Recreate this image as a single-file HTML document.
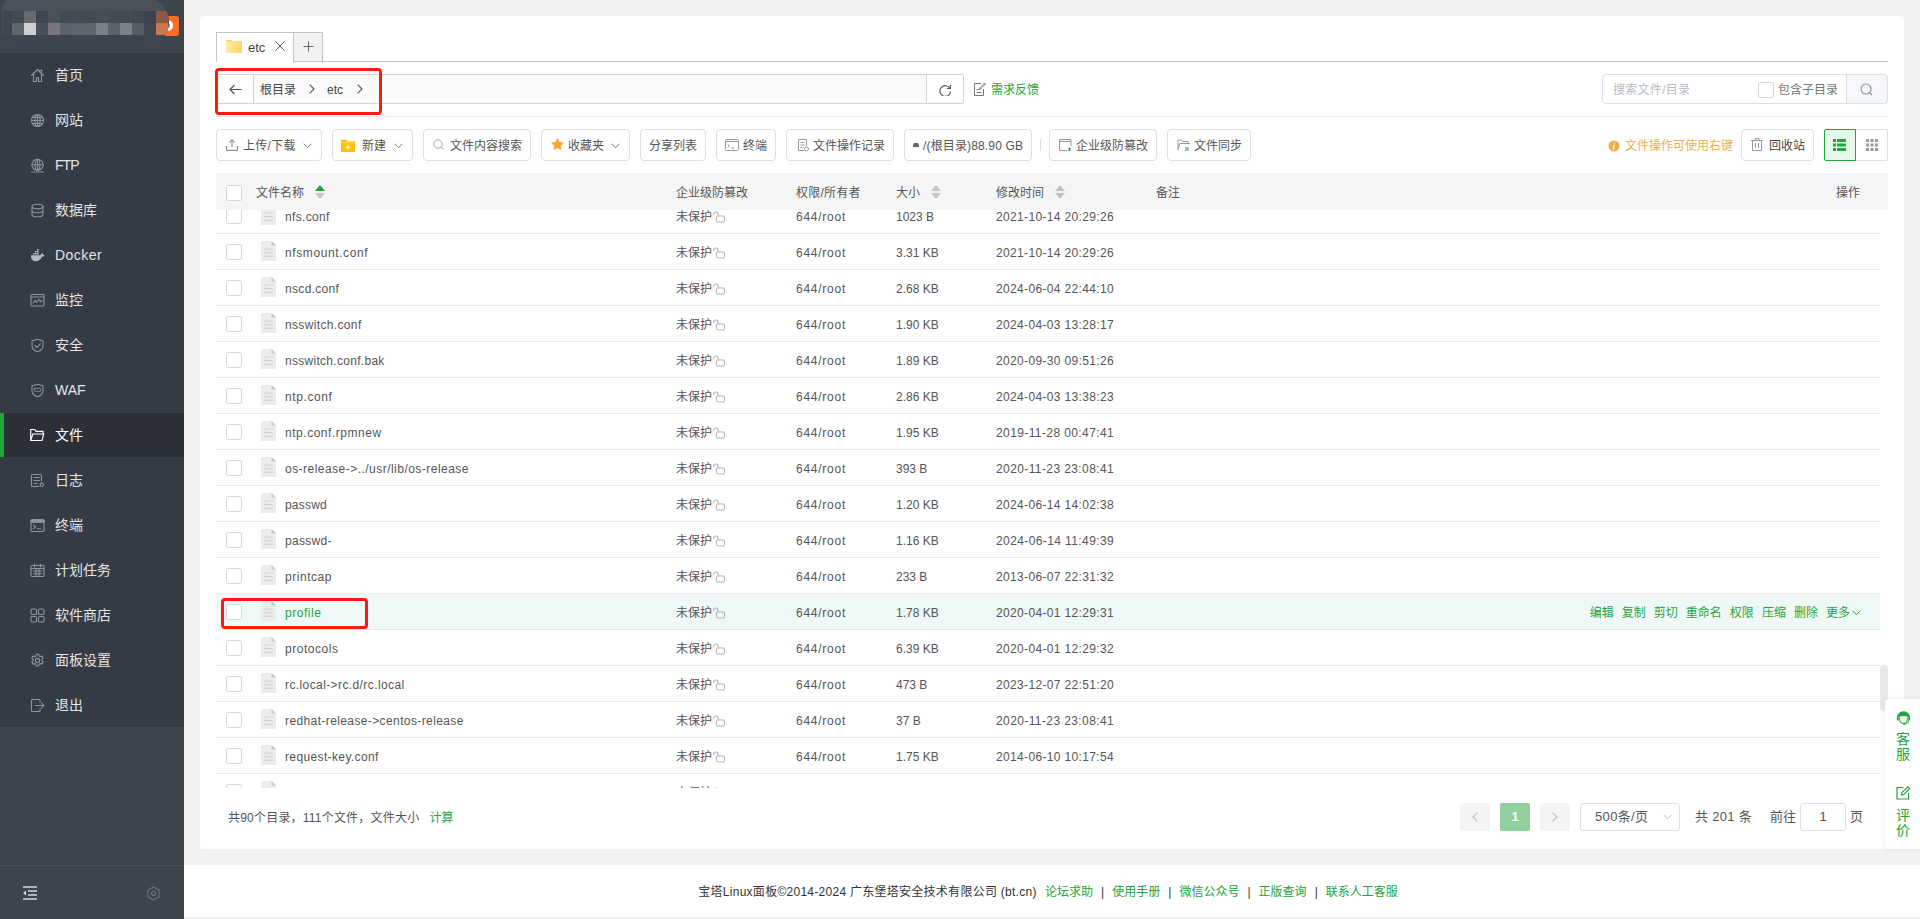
<!DOCTYPE html>
<html lang="zh-CN">
<head>
<meta charset="utf-8">
<title>宝塔Linux面板</title>
<style>
*{box-sizing:border-box;margin:0;padding:0}
html,body{width:1920px;height:919px;overflow:hidden}
body{position:relative;background:#f2f2f2;font-family:"Liberation Sans","Noto Sans CJK SC",sans-serif;font-size:12px;color:#666;line-height:1}
.a{position:absolute}
svg{display:block;position:absolute}
#side{position:absolute;left:0;top:0;width:184px;height:919px;background:#3d444d}
#side .menu{position:absolute;left:0;top:53px;width:184px;height:674px;background:#353b44}
.mi{position:relative;height:44px;width:184px;margin-bottom:1px}
.mi svg{left:30px;top:15px}
.mi .tx{position:absolute;left:55px;top:0;height:44px;line-height:44px;font-size:14px;color:#e4e4e4;white-space:nowrap}
.mi.on{background:#2b3038}
.mi.on:before{content:"";position:absolute;left:0;top:0;width:4px;height:44px;background:#20a53a}
.mi.on .tx{color:#fff}
#side .bt{position:absolute;left:0;top:865px;width:184px;height:54px;border-top:1px solid #48505a}
#card{position:absolute;left:200px;top:16px;width:1704px;height:833px;background:#fff;border-radius:4px}
#foot{position:absolute;left:184px;top:865px;width:1736px;height:52px;background:#fff}
#foot .t{position:absolute;left:0;top:0;width:1736px;height:52px;line-height:54px;text-align:center;color:#333;white-space:nowrap}
#foot .t a{color:#20a53a}
#foot .t i{font-style:normal;color:#333;display:inline-block;width:19.200px;text-align:center}
.btn{position:absolute;top:129px;height:32px;border:1px solid #dcdfe6;border-radius:4px;background:#fff;color:#555;white-space:nowrap}
.btn span{position:absolute;top:1px;line-height:30px}
.g{color:#20a53a}
.cb{position:absolute;width:16px;height:16px;border:1px solid #d4d7e0;border-radius:2px;background:#fff}
.row{position:absolute;left:216px;width:1664px;height:36px;border-bottom:1px solid #ececec}
.row span{position:absolute;top:2px;line-height:35px;white-space:nowrap;color:#555}
.row .cb{left:10px;top:10px}
.row .fi{left:45px;top:7px}
.row .n{left:69px}
.row .p{left:460px}
.row .lk{left:497px;top:13px}
.row .o{left:580px}
.row .s{left:680px}
.row .d{left:780px}
.row.hv{background:#f0f8f7;border-bottom-color:#daeee8}
.row.hv .n{color:#20a53a}
.row .act{left:1365.800px;color:#20a53a}
.row .act b{font-weight:normal;margin-left:8px}
.th{position:absolute;top:175px;height:36px;line-height:37px;color:#555;white-space:nowrap}
.sa{position:absolute;width:0;height:0;border-left:5px solid transparent;border-right:5px solid transparent}
.sa.u{border-bottom:6px solid #c0c4cc}
.sa.d{border-top:6px solid #c0c4cc}
.pg{position:absolute;top:803px;height:28px;border-radius:2px;line-height:28px;text-align:center;color:#555;font-size:13px;white-space:nowrap}
</style>
</head>
<body>
<div id="side">
<div class="a" style="left:160px;top:16px;width:19px;height:20px;border-radius:3px;background:#fc6d26"></div>
<div class="a" style="left:161px;top:20px;width:12px;height:11px;border:3.500px solid #fff;border-radius:6px"></div>
<div class="a" style="left:2px;top:-3px;width:167px;height:50px;border-radius:14px 25px 25px 14px;background:#4a5159;overflow:hidden"><div class="a" style="left:1px;top:14px;width:9px;height:24px;background:#3f464f"></div><div class="a" style="left:10px;top:14px;width:12px;height:12px;background:#434a53"></div><div class="a" style="left:22px;top:14px;width:12px;height:12px;background:#656b73"></div><div class="a" style="left:34px;top:14px;width:12px;height:12px;background:#3e454e"></div><div class="a" style="left:46px;top:14px;width:12px;height:12px;background:#4a5159"></div><div class="a" style="left:58px;top:14px;width:12px;height:12px;background:#434a52"></div><div class="a" style="left:70px;top:14px;width:12px;height:12px;background:#444b53"></div><div class="a" style="left:82px;top:14px;width:12px;height:12px;background:#434a52"></div><div class="a" style="left:94px;top:14px;width:12px;height:12px;background:#464d55"></div><div class="a" style="left:106px;top:14px;width:12px;height:12px;background:#444b53"></div><div class="a" style="left:118px;top:14px;width:12px;height:12px;background:#444b53"></div><div class="a" style="left:130px;top:14px;width:12px;height:12px;background:#414850"></div><div class="a" style="left:142px;top:14px;width:12px;height:12px;background:#3b424b"></div><div class="a" style="left:154px;top:14px;width:12px;height:12px;background:#8a5a45"></div><div class="a" style="left:10px;top:26px;width:12px;height:12px;background:#60666e"></div><div class="a" style="left:22px;top:26px;width:12px;height:12px;background:#cfd0d2"></div><div class="a" style="left:34px;top:26px;width:12px;height:12px;background:#48505a"></div><div class="a" style="left:46px;top:26px;width:12px;height:12px;background:#76767c"></div><div class="a" style="left:58px;top:26px;width:12px;height:12px;background:#5b616a"></div><div class="a" style="left:70px;top:26px;width:12px;height:12px;background:#5e656d"></div><div class="a" style="left:82px;top:26px;width:12px;height:12px;background:#5f646d"></div><div class="a" style="left:94px;top:26px;width:12px;height:12px;background:#7a8086"></div><div class="a" style="left:106px;top:26px;width:12px;height:12px;background:#5c626a"></div><div class="a" style="left:118px;top:26px;width:12px;height:12px;background:#7b8187"></div><div class="a" style="left:130px;top:26px;width:12px;height:12px;background:#565c64"></div><div class="a" style="left:142px;top:26px;width:12px;height:12px;background:#3e454e"></div><div class="a" style="left:154px;top:26px;width:12px;height:12px;background:#c87850"></div><div class="a" style="left:0;top:38px;width:167px;height:20px;background:#3d444d"></div><div class="a" style="left:154px;top:38px;width:12px;height:12px;background:#44454b"></div></div>

<div class="menu">
<div class="mi"><svg width="15" height="15" viewBox="0 0 15 15" ><path fill="none" stroke="#8f959c" stroke-width="1.1" stroke-linecap="round" stroke-linejoin="round" d="M1.5 7.5L7.5 1.5L13.5 7.5M3.5 6v7.5h3v-4h2v4h3V6M10 2.2h1.6v1.6"/></svg><div class="tx" style="">首页</div></div>
<div class="mi"><svg width="15" height="15" viewBox="0 0 15 15" ><g fill="none" stroke="#8f959c" stroke-width="1.1" stroke-linecap="round" stroke-linejoin="round"><circle cx="7.5" cy="7.5" r="6"/><ellipse cx="7.5" cy="7.5" rx="2.6" ry="6"/><path d="M1.5 7.5h12M2.4 4.5h10.2M2.4 10.5h10.2M7.5 1.5v12"/></g></svg><div class="tx" style="">网站</div></div>
<div class="mi"><svg width="15" height="15" viewBox="0 0 15 15" ><g fill="none" stroke="#8f959c" stroke-width="1.1" stroke-linecap="round" stroke-linejoin="round"><circle cx="7.5" cy="6.8" r="5.6"/><ellipse cx="7.5" cy="6.8" rx="2.4" ry="5.6"/><path d="M1.9 6.8h11.2M7.5 1.2v11.2M1.5 14h12"/></g></svg><div class="tx" style="letter-spacing:-0.98px">FTP</div></div>
<div class="mi"><svg width="15" height="15" viewBox="0 0 15 15" ><g fill="none" stroke="#8f959c" stroke-width="1.1" stroke-linecap="round" stroke-linejoin="round"><ellipse cx="7.5" cy="3.6" rx="5.5" ry="2.3"/><path d="M2 3.6v7.8c0 1.3 2.5 2.3 5.5 2.3s5.5-1 5.5-2.3V3.6M2 7.5c0 1.3 2.5 2.3 5.5 2.3s5.5-1 5.5-2.3"/></g></svg><div class="tx" style="">数据库</div></div>
<div class="mi"><svg width="15" height="15" viewBox="0 0 15 15" ><path fill="#b9bdc2" d="M1 7.2h9.6c.3-1.2 1-1.9 1.9-2.2.3.6.3 1.2.1 1.8.7-.1 1.4 0 1.9.4-.5 1-1.500 1.500-2.800 1.500C10.700 11.600 8.600 13.200 5.600 13.200 2.800 13.200 1 11.500 1 7.200zM3 5h1.600v1.600H3zM5 5h1.600v1.600H5zM7 5h1.600v1.600H7zM5 3h1.600v1.600H5zM7 3h1.600v1.600H7zM7 1h1.600v1.600H7z"/></svg><div class="tx" style="letter-spacing:0.44px">Docker</div></div>
<div class="mi"><svg width="15" height="15" viewBox="0 0 15 15" ><g fill="none" stroke="#8f959c" stroke-width="1.1" stroke-linecap="round" stroke-linejoin="round"><rect x="1" y="1.5" width="13" height="11.5" rx="1"/><path d="M1 4h13M3 10l2-2.5 1.800 1.800 2-3 1.700 2.500 1.500-1.300"/></g></svg><div class="tx" style="">监控</div></div>
<div class="mi"><svg width="15" height="15" viewBox="0 0 15 15" ><g fill="none" stroke="#8f959c" stroke-width="1.1" stroke-linecap="round" stroke-linejoin="round"><path d="M7.500 1.200L13 3v4.500c0 3-2.300 5.300-5.500 6.300C4.300 12.800 2 10.500 2 7.500V3z"/><path d="M5 7.500l2 2 3.200-3.500"/></g></svg><div class="tx" style="">安全</div></div>
<div class="mi"><svg width="15" height="15" viewBox="0 0 15 15" ><g fill="none" stroke="#8f959c" stroke-width="1.1" stroke-linecap="round" stroke-linejoin="round"><path d="M7.500 1.200L13 3v4.500c0 3-2.300 5.300-5.500 6.300C4.300 12.800 2 10.500 2 7.500V3z"/><rect x="4.300" y="5.300" width="6.400" height="3" rx=".5" stroke-width=".8"/></g></svg><div class="tx" style="letter-spacing:-0.03px">WAF</div></div>
<div class="mi on"><svg width="15" height="15" viewBox="0 0 15 15" ><path fill="none" stroke="#fff" stroke-width="1.150" stroke-linejoin="miter" d="M.700 12.500V1.500h4.200l1.100 1.900h7v2.600M.700 12.500L2.800 6h10.900l-1.700 6.500z"/></svg><div class="tx" style="">文件</div></div>
<div class="mi"><svg width="15" height="15" viewBox="0 0 15 15" ><g fill="none" stroke="#8f959c" stroke-width="1.1" stroke-linecap="round" stroke-linejoin="round"><path d="M9 13.500H2.500a1 1 0 0 1-1-1v-10a1 1 0 0 1 1-1h8a1 1 0 0 1 1 1V8M4 4.500h5.500M4 7.500h5.500M4 10.500h3"/><circle cx="11.800" cy="11.800" r="1.700"/></g></svg><div class="tx" style="">日志</div></div>
<div class="mi"><svg width="15" height="15" viewBox="0 0 15 15" ><g fill="none" stroke="#8f959c" stroke-width="1.1" stroke-linecap="round" stroke-linejoin="round"><rect x="1" y="1.500" width="13" height="12" rx="1"/><path d="M1 4.300h13M3.500 7l2 1.800-2 1.800M7.500 10.800h3" /><path d="M1 2.500h13v1.500H1z" fill="#8f959c"/></g></svg><div class="tx" style="">终端</div></div>
<div class="mi"><svg width="15" height="15" viewBox="0 0 15 15" ><g fill="none" stroke="#8f959c" stroke-width="1.1" stroke-linecap="round" stroke-linejoin="round"><rect x="1" y="2.500" width="13" height="11" rx="1"/><path d="M1 5.500h13M4.500 1v3M10.500 1v3M3.500 8h8M3.500 10.800h8M6 5.500v8M9 5.500v8"/></g></svg><div class="tx" style="">计划任务</div></div>
<div class="mi"><svg width="15" height="15" viewBox="0 0 15 15" ><g fill="none" stroke="#8f959c" stroke-width="1.1" stroke-linecap="round" stroke-linejoin="round"><rect x="1" y="1" width="5.500" height="5.500" rx="1"/><rect x="8.500" y="1" width="5.500" height="5.500" rx="1"/><rect x="1" y="8.500" width="5.500" height="5.500" rx="1"/><rect x="8.500" y="8.500" width="5.500" height="5.500" rx="1"/></g></svg><div class="tx" style="">软件商店</div></div>
<div class="mi"><svg width="15" height="15" viewBox="0 0 15 15" ><g fill="none" stroke="#8f959c" stroke-width="1.1" stroke-linecap="round" stroke-linejoin="round"><path d="M6.300 1.200h2.400l.4 1.700 1.200.7 1.700-.5 1.200 2.100-1.300 1.200v1.400l1.300 1.200-1.200 2.100-1.700-.5-1.200.7-.4 1.700H6.300l-.4-1.700-1.200-.7-1.700.5-1.200-2.100 1.300-1.200V6.400L1.800 5.200 3 3.100l1.700.5 1.200-.7z"/><circle cx="7.500" cy="7.500" r="2.100"/></g></svg><div class="tx" style="">面板设置</div></div>
<div class="mi"><svg width="15" height="15" viewBox="0 0 15 15" ><g fill="none" stroke="#8f959c" stroke-width="1.1" stroke-linecap="round" stroke-linejoin="round"><path d="M10 4V2.500a1 1 0 0 0-1-1H2.500a1 1 0 0 0-1 1v10a1 1 0 0 0 1 1H9a1 1 0 0 0 1-1V11M5.500 7.500h8M11.500 5l2.300 2.500-2.300 2.500"/></g></svg><div class="tx" style="">退出</div></div>
</div>
<div class="bt"><svg width="15" height="14" viewBox="0 0 15 14" style="left:23px;top:20px"><path fill="none" stroke="#d5d7d9" stroke-width="1.400" d="M0 1h14M5 5h9M5 9h9M0 13h14"/><path fill="#d5d7d9" d="M3 4.500v5L0 7z"/></svg><svg width="15" height="15" viewBox="0 0 15 15" style="left:146px;top:20px"><g fill="none" stroke="#6f7680" stroke-width="1.100" stroke-linejoin="round"><path d="M7.500 1l5.600 3.200v6.600L7.500 14 1.900 10.800V4.200z"/><circle cx="7.500" cy="7.500" r="2"/></g></svg></div>
</div>
<div id="card"></div>
<div class="a" style="left:216px;top:61px;width:1672px;height:1px;background:#c4c4c4"></div>
<div class="a" style="left:216px;top:32px;width:78px;height:30px;border:1px solid #c4c4c4;border-bottom:none;background:#fff"></div>
<div class="a" style="left:293px;top:32px;width:30px;height:30px;border:1px solid #c4c4c4;background:#f2f2f2"></div>
<div class="a" style="left:226px;top:40px;width:6px;height:2px;border-radius:1px 1px 0 0;background:#ffca4a"></div><div class="a" style="left:226px;top:41px;width:16px;height:12px;border-radius:1px;background:linear-gradient(90deg,#ffe9a6,#ffd766)"></div>
<div class="a" style="left:248px;top:33px;line-height:30px;font-size:13px;color:#444">etc</div>
<svg width="10" height="10" viewBox="0 0 10 10" style="left:275px;top:41px"><path d="M.5.500l9 9M9.500.500l-9 9" stroke="#555" stroke-width="1" fill="none"/></svg>
<svg width="11" height="11" viewBox="0 0 11 11" style="left:303px;top:41px"><path d="M5.500.500v10M.500 5.500h10" stroke="#666" stroke-width="1" fill="none"/></svg>
<div class="a" style="left:216px;top:74px;width:711px;height:30px;border:1px solid #d3d3d3;background:#fafafa;border-radius:2px 0 0 2px"></div>
<div class="a" style="left:216px;top:74px;width:38px;height:30px;border:1px solid #d3d3d3;background:#fff;border-radius:2px 0 0 2px"></div>
<svg width="13" height="11" viewBox="0 0 13 11" style="left:229px;top:84px"><path d="M12.500 5.500H1M5.500 1L1 5.500 5.500 10" stroke="#555" stroke-width="1.200" fill="none"/></svg>
<div class="a" style="left:260px;top:76px;line-height:28px;color:#444;white-space:nowrap">根目录</div>
<svg width="6" height="10" viewBox="0 0 6 10" style="left:309px;top:84px"><path d="M.700.700L5 5 .700 9.300" stroke="#555" stroke-width="1.100" fill="none"/></svg>
<div class="a" style="left:327px;top:76px;line-height:28px;color:#444;white-space:nowrap">etc</div>
<svg width="6" height="10" viewBox="0 0 6 10" style="left:357px;top:84px"><path d="M.700.700L5 5 .700 9.300" stroke="#555" stroke-width="1.100" fill="none"/></svg>
<div class="a" style="left:926px;top:74px;width:38px;height:30px;border:1px solid #d3d3d3;background:#fff;border-radius:0 2px 2px 0"></div>
<svg width="12.500" height="12.500" viewBox="0 0 14 14" style="left:939px;top:83.500px"><path d="M12.300 5A6 6 0 1 0 13 8.500M12.800 1.200V5H9" stroke="#555" stroke-width="1.300" fill="none"/></svg>
<svg width="13" height="14" viewBox="0 0 13 14" style="left:973px;top:82px"><g fill="none" stroke="#777" stroke-width="1"><path d="M8 1.500H1.500v12h9V7"/><path d="M3.500 7.500h4M3.500 10.500h5M6.500 6l5-5 1 1-5 5z"/></g></svg>
<div class="a g" style="left:991px;top:76px;line-height:28px;white-space:nowrap">需求反馈</div>
<div class="a" style="left:1602px;top:74px;width:286px;height:30px;border:1px solid #dcdfe6;border-radius:4px;background:#fff"></div>
<div class="a" style="left:1846px;top:74px;width:42px;height:30px;border:1px solid #dcdfe6;border-radius:0 4px 4px 0;background:#f5f7fa"></div>
<div class="a" style="left:1613px;top:76px;line-height:28px;color:#b8bcc4;white-space:nowrap;letter-spacing:0.29px">搜索文件/目录</div>
<div class="cb" style="left:1758px;top:82px"></div>
<div class="a" style="left:1778px;top:76px;line-height:28px;color:#777;white-space:nowrap">包含子目录</div>
<svg width="13" height="13" viewBox="0 0 13 13" style="left:1860px;top:83px"><g fill="none" stroke="#8a8f99" stroke-width="1.100"><circle cx="6" cy="6" r="5"/><path d="M9.700 9.700l2.300 2.300"/></g></svg>
<div class="a" style="left:216px;top:116px;width:1672px;height:1px;background:#ececec"></div>
<div class="btn" style="left:216px;width:106px"><svg width="12" height="12" viewBox="0 0 12 12" style="left:9px;top:9px"><path d="M6 8V1M3 3.500L6 .800 9 3.500M.600 7v4.400h10.800V7" stroke="#777" stroke-width="1" fill="none"/></svg><span style="left:26px;letter-spacing:0.31px">上传/下载</span><svg width="9" height="6" viewBox="0 0 9 6" style="left:86px;top:13px"><path d="M.500.700l4 4 4-4" stroke="#777" stroke-width="1" fill="none"/></svg></div>
<div class="btn" style="left:332px;width:81px"><svg width="14" height="12" viewBox="0 0 14 12" style="left:8px;top:10px"><path d="M0 0h5.500l1 1.500H0z" fill="#ffa000"/><path d="M0 1.500h14V12H0z" fill="#ffc107"/><path d="M0 2.800h14" stroke="#ffd54f" stroke-width=".600"/><path d="M7 4.800v5M4.500 7.300h5" stroke="#fff" stroke-width="1.100"/></svg><span style="left:29px">新建</span><svg width="9" height="6" viewBox="0 0 9 6" style="left:61px;top:13px"><path d="M.500.700l4 4 4-4" stroke="#777" stroke-width="1" fill="none"/></svg></div>
<div class="btn" style="left:423px;width:108px"><svg width="11" height="11" viewBox="0 0 11 11" style="left:9px;top:9px"><g fill="none" stroke="#aaa" stroke-width="1"><circle cx="5" cy="5" r="4.200"/><path d="M8 8l2.500 2.500"/></g></svg><span style="left:26px">文件内容搜索</span></div>
<div class="btn" style="left:541px;width:89px"><svg width="13" height="12" viewBox="0 0 13 12" style="left:9px;top:8px"><path d="M6.500 0l2 4.100 4.500.600-3.300 3.100.800 4.400-4-2.200-4 2.200.800-4.400L0 4.700l4.500-.600z" fill="#ffa62b"/></svg><span style="left:26px">收藏夹</span><svg width="9" height="6" viewBox="0 0 9 6" style="left:69px;top:13px"><path d="M.500.700l4 4 4-4" stroke="#777" stroke-width="1" fill="none"/></svg></div>
<div class="btn" style="left:640px;width:66px"><span style="left:8px">分享列表</span></div>
<div class="btn" style="left:716px;width:60px"><svg width="14" height="12" viewBox="0 0 14 12" style="left:8px;top:9px"><g fill="none" stroke="#999" stroke-width="1"><rect x=".500" y=".500" width="13" height="11" rx="1"/><path d="M.500 2.500h13M2.500 5l2 1.700-2 1.700M6 9h3"/></g></svg><span style="left:26px">终端</span></div>
<div class="btn" style="left:786px;width:108px"><svg width="12" height="13" viewBox="0 0 12 13" style="left:10px;top:9px"><g fill="none" stroke="#999" stroke-width="1"><path d="M7 11.500H1.500v-11h8v6M3.500 3.500h4M3.500 6h4M3.500 8.500h2"/><circle cx="9.500" cy="10" r="2"/></g></svg><span style="left:26px">文件操作记录</span></div>
<div class="btn" style="left:904px;width:128px"><svg width="6" height="4" viewBox="0 0 6 4" style="left:8px;top:13px"><path d="M1 0h4l1 2v2H0V2z" fill="#666"/></svg><span style="left:18px;letter-spacing:0.15px">/(根目录)88.90 GB</span></div>
<div class="a" style="left:1040px;top:139px;width:1px;height:12px;background:#dcdfe6"></div>
<div class="btn" style="left:1049px;width:108px"><svg width="13" height="12" viewBox="0 0 13 12" style="left:9px;top:9px"><g fill="none" stroke="#999" stroke-width="1"><path d="M8 11.500H.500V.500h11.500V7M.500 2.500H12"/></g><path d="M9.500 12V9.500l1-1.500 1 1.500V12z" fill="#20a53a"/></svg><span style="left:26px">企业级防篡改</span></div>
<div class="btn" style="left:1167px;width:84px"><svg width="14" height="12" viewBox="0 0 14 12" style="left:9px;top:9px"><g fill="none" stroke="#999" stroke-width="1"><path d="M1 11V1h3.500l1 1.500H11v2M1 11l1.800-6.500H13"/></g><path d="M8 9h4M8 11h4" stroke="#20a53a" stroke-width="1"/></svg><span style="left:26px">文件同步</span></div>
<svg width="12" height="12" viewBox="0 0 12 12" style="left:1608px;top:140px"><circle cx="6" cy="6" r="5.500" fill="#f0ad4e"/><path d="M6.500 2.500l-.300 1M6.200 5l-.900 4.500" stroke="#fff" stroke-width="1.300"/></svg>
<div class="a" style="left:1625px;top:131px;line-height:30px;color:#f0ad4e;white-space:nowrap">文件操作可使用右键</div>
<div class="btn" style="left:1741px;width:73px"><svg width="12" height="13" viewBox="0 0 12 13" style="left:9px;top:8px"><g fill="none" stroke="#999" stroke-width="1"><path d="M0 2.500h12M4 2.500V.500h4v2M1.500 2.500v10h9v-10M4.500 5v5M7.500 5v5"/></g></svg><span style="left:27px;color:#444">回收站</span></div>
<div class="a" style="left:1855px;top:129px;width:33px;height:32px;border:1px solid #dcdfe6;border-left:none;border-radius:0 2px 2px 0;background:#fff"></div>
<div class="a" style="left:1824px;top:129px;width:32px;height:32px;border:1px solid #20a53a;border-radius:2px 0 0 2px;background:#e9f6eb"></div>
<svg width="13" height="12" viewBox="0 0 13 12" style="left:1833px;top:139px"><g fill="#20a53a"><rect x="0" y="0" width="3" height="3"/><rect x="4" y="0" width="9" height="3"/><rect x="0" y="4.500" width="3" height="3"/><rect x="4" y="4.500" width="9" height="3"/><rect x="0" y="9" width="3" height="3"/><rect x="4" y="9" width="9" height="3"/></g></svg>
<svg width="12" height="12" viewBox="0 0 12 12" style="left:1866px;top:139px"><g fill="#999"><rect x="0" y="0" width="3" height="3"/><rect x="0" y="4.5" width="3" height="3"/><rect x="0" y="9" width="3" height="3"/><rect x="4.5" y="0" width="3" height="3"/><rect x="4.5" y="4.5" width="3" height="3"/><rect x="4.5" y="9" width="3" height="3"/><rect x="9" y="0" width="3" height="3"/><rect x="9" y="4.5" width="3" height="3"/><rect x="9" y="9" width="3" height="3"/></g></svg>
<div class="a" style="left:216px;top:209px;width:1672px;height:579px;overflow:hidden">
<div class="row" style="left:0;top:-11px"><div class="cb"></div><svg class="fi" width="15" height="20" viewBox="0 0 15 20"><path d="M0 1a1 1 0 0 1 1-1h9.500L15 4.500V19a1 1 0 0 1-1 1H1a1 1 0 0 1-1-1z" fill="#ececec"/><path d="M10.500 0L15 4.500h-4.500z" fill="#c8c8c8"/><path d="M3 8h9M3 11.700h9M3 15.400h9" stroke="#d4d4d4" stroke-width="1.200"/></svg><span class="n" style="letter-spacing:0.34px">nfs.conf</span><span class="p">未保护</span><svg class="lk" width="12" height="12" viewBox="0 0 12 12"><g fill="none" stroke="#b4b4b4" stroke-width="1.100"><rect x="3.500" y="5" width="8" height="6" rx="1.200"/><path d="M5 5V3.200a2.200 2.200 0 0 0-4.400 0v1"/></g></svg><span class="o" style="letter-spacing:0.74px">644/root</span><span class="s">1023 B</span><span class="d" style="letter-spacing:0.35px">2021-10-14 20:29:26</span></div>
<div class="row" style="left:0;top:25px"><div class="cb"></div><svg class="fi" width="15" height="20" viewBox="0 0 15 20"><path d="M0 1a1 1 0 0 1 1-1h9.500L15 4.500V19a1 1 0 0 1-1 1H1a1 1 0 0 1-1-1z" fill="#ececec"/><path d="M10.500 0L15 4.500h-4.500z" fill="#c8c8c8"/><path d="M3 8h9M3 11.700h9M3 15.400h9" stroke="#d4d4d4" stroke-width="1.200"/></svg><span class="n" style="letter-spacing:0.60px">nfsmount.conf</span><span class="p">未保护</span><svg class="lk" width="12" height="12" viewBox="0 0 12 12"><g fill="none" stroke="#b4b4b4" stroke-width="1.100"><rect x="3.500" y="5" width="8" height="6" rx="1.200"/><path d="M5 5V3.200a2.200 2.200 0 0 0-4.400 0v1"/></g></svg><span class="o" style="letter-spacing:0.74px">644/root</span><span class="s">3.31 KB</span><span class="d" style="letter-spacing:0.35px">2021-10-14 20:29:26</span></div>
<div class="row" style="left:0;top:61px"><div class="cb"></div><svg class="fi" width="15" height="20" viewBox="0 0 15 20"><path d="M0 1a1 1 0 0 1 1-1h9.500L15 4.500V19a1 1 0 0 1-1 1H1a1 1 0 0 1-1-1z" fill="#ececec"/><path d="M10.500 0L15 4.500h-4.500z" fill="#c8c8c8"/><path d="M3 8h9M3 11.700h9M3 15.400h9" stroke="#d4d4d4" stroke-width="1.200"/></svg><span class="n" style="letter-spacing:0.32px">nscd.conf</span><span class="p">未保护</span><svg class="lk" width="12" height="12" viewBox="0 0 12 12"><g fill="none" stroke="#b4b4b4" stroke-width="1.100"><rect x="3.500" y="5" width="8" height="6" rx="1.200"/><path d="M5 5V3.200a2.200 2.200 0 0 0-4.400 0v1"/></g></svg><span class="o" style="letter-spacing:0.74px">644/root</span><span class="s">2.68 KB</span><span class="d" style="letter-spacing:0.35px">2024-06-04 22:44:10</span></div>
<div class="row" style="left:0;top:97px"><div class="cb"></div><svg class="fi" width="15" height="20" viewBox="0 0 15 20"><path d="M0 1a1 1 0 0 1 1-1h9.500L15 4.500V19a1 1 0 0 1-1 1H1a1 1 0 0 1-1-1z" fill="#ececec"/><path d="M10.500 0L15 4.500h-4.500z" fill="#c8c8c8"/><path d="M3 8h9M3 11.700h9M3 15.400h9" stroke="#d4d4d4" stroke-width="1.200"/></svg><span class="n" style="letter-spacing:0.35px">nsswitch.conf</span><span class="p">未保护</span><svg class="lk" width="12" height="12" viewBox="0 0 12 12"><g fill="none" stroke="#b4b4b4" stroke-width="1.100"><rect x="3.500" y="5" width="8" height="6" rx="1.200"/><path d="M5 5V3.200a2.200 2.200 0 0 0-4.400 0v1"/></g></svg><span class="o" style="letter-spacing:0.74px">644/root</span><span class="s">1.90 KB</span><span class="d" style="letter-spacing:0.35px">2024-04-03 13:28:17</span></div>
<div class="row" style="left:0;top:133px"><div class="cb"></div><svg class="fi" width="15" height="20" viewBox="0 0 15 20"><path d="M0 1a1 1 0 0 1 1-1h9.500L15 4.500V19a1 1 0 0 1-1 1H1a1 1 0 0 1-1-1z" fill="#ececec"/><path d="M10.500 0L15 4.500h-4.500z" fill="#c8c8c8"/><path d="M3 8h9M3 11.700h9M3 15.400h9" stroke="#d4d4d4" stroke-width="1.200"/></svg><span class="n" style="letter-spacing:0.29px">nsswitch.conf.bak</span><span class="p">未保护</span><svg class="lk" width="12" height="12" viewBox="0 0 12 12"><g fill="none" stroke="#b4b4b4" stroke-width="1.100"><rect x="3.500" y="5" width="8" height="6" rx="1.200"/><path d="M5 5V3.200a2.200 2.200 0 0 0-4.400 0v1"/></g></svg><span class="o" style="letter-spacing:0.74px">644/root</span><span class="s">1.89 KB</span><span class="d" style="letter-spacing:0.35px">2020-09-30 09:51:26</span></div>
<div class="row" style="left:0;top:169px"><div class="cb"></div><svg class="fi" width="15" height="20" viewBox="0 0 15 20"><path d="M0 1a1 1 0 0 1 1-1h9.500L15 4.500V19a1 1 0 0 1-1 1H1a1 1 0 0 1-1-1z" fill="#ececec"/><path d="M10.500 0L15 4.500h-4.500z" fill="#c8c8c8"/><path d="M3 8h9M3 11.700h9M3 15.400h9" stroke="#d4d4d4" stroke-width="1.200"/></svg><span class="n" style="letter-spacing:0.59px">ntp.conf</span><span class="p">未保护</span><svg class="lk" width="12" height="12" viewBox="0 0 12 12"><g fill="none" stroke="#b4b4b4" stroke-width="1.100"><rect x="3.500" y="5" width="8" height="6" rx="1.200"/><path d="M5 5V3.200a2.200 2.200 0 0 0-4.400 0v1"/></g></svg><span class="o" style="letter-spacing:0.74px">644/root</span><span class="s">2.86 KB</span><span class="d" style="letter-spacing:0.35px">2024-04-03 13:38:23</span></div>
<div class="row" style="left:0;top:205px"><div class="cb"></div><svg class="fi" width="15" height="20" viewBox="0 0 15 20"><path d="M0 1a1 1 0 0 1 1-1h9.500L15 4.500V19a1 1 0 0 1-1 1H1a1 1 0 0 1-1-1z" fill="#ececec"/><path d="M10.500 0L15 4.500h-4.500z" fill="#c8c8c8"/><path d="M3 8h9M3 11.700h9M3 15.400h9" stroke="#d4d4d4" stroke-width="1.200"/></svg><span class="n" style="letter-spacing:0.53px">ntp.conf.rpmnew</span><span class="p">未保护</span><svg class="lk" width="12" height="12" viewBox="0 0 12 12"><g fill="none" stroke="#b4b4b4" stroke-width="1.100"><rect x="3.500" y="5" width="8" height="6" rx="1.200"/><path d="M5 5V3.200a2.200 2.200 0 0 0-4.400 0v1"/></g></svg><span class="o" style="letter-spacing:0.74px">644/root</span><span class="s">1.95 KB</span><span class="d" style="letter-spacing:0.40px">2019-11-28 00:47:41</span></div>
<div class="row" style="left:0;top:241px"><div class="cb"></div><svg class="fi" width="15" height="20" viewBox="0 0 15 20"><path d="M0 1a1 1 0 0 1 1-1h9.500L15 4.500V19a1 1 0 0 1-1 1H1a1 1 0 0 1-1-1z" fill="#ececec"/><path d="M10.500 0L15 4.500h-4.500z" fill="#c8c8c8"/><path d="M3 8h9M3 11.700h9M3 15.400h9" stroke="#d4d4d4" stroke-width="1.200"/></svg><span class="n" style="letter-spacing:0.47px">os-release-&gt;../usr/lib/os-release</span><span class="p">未保护</span><svg class="lk" width="12" height="12" viewBox="0 0 12 12"><g fill="none" stroke="#b4b4b4" stroke-width="1.100"><rect x="3.500" y="5" width="8" height="6" rx="1.200"/><path d="M5 5V3.200a2.200 2.200 0 0 0-4.400 0v1"/></g></svg><span class="o" style="letter-spacing:0.74px">644/root</span><span class="s">393 B</span><span class="d" style="letter-spacing:0.40px">2020-11-23 23:08:41</span></div>
<div class="row" style="left:0;top:277px"><div class="cb"></div><svg class="fi" width="15" height="20" viewBox="0 0 15 20"><path d="M0 1a1 1 0 0 1 1-1h9.500L15 4.500V19a1 1 0 0 1-1 1H1a1 1 0 0 1-1-1z" fill="#ececec"/><path d="M10.500 0L15 4.500h-4.500z" fill="#c8c8c8"/><path d="M3 8h9M3 11.700h9M3 15.400h9" stroke="#d4d4d4" stroke-width="1.200"/></svg><span class="n" style="letter-spacing:0.20px">passwd</span><span class="p">未保护</span><svg class="lk" width="12" height="12" viewBox="0 0 12 12"><g fill="none" stroke="#b4b4b4" stroke-width="1.100"><rect x="3.500" y="5" width="8" height="6" rx="1.200"/><path d="M5 5V3.200a2.200 2.200 0 0 0-4.400 0v1"/></g></svg><span class="o" style="letter-spacing:0.74px">644/root</span><span class="s">1.20 KB</span><span class="d" style="letter-spacing:0.35px">2024-06-14 14:02:38</span></div>
<div class="row" style="left:0;top:313px"><div class="cb"></div><svg class="fi" width="15" height="20" viewBox="0 0 15 20"><path d="M0 1a1 1 0 0 1 1-1h9.500L15 4.500V19a1 1 0 0 1-1 1H1a1 1 0 0 1-1-1z" fill="#ececec"/><path d="M10.500 0L15 4.500h-4.500z" fill="#c8c8c8"/><path d="M3 8h9M3 11.700h9M3 15.400h9" stroke="#d4d4d4" stroke-width="1.200"/></svg><span class="n" style="letter-spacing:0.30px">passwd-</span><span class="p">未保护</span><svg class="lk" width="12" height="12" viewBox="0 0 12 12"><g fill="none" stroke="#b4b4b4" stroke-width="1.100"><rect x="3.500" y="5" width="8" height="6" rx="1.200"/><path d="M5 5V3.200a2.200 2.200 0 0 0-4.400 0v1"/></g></svg><span class="o" style="letter-spacing:0.74px">644/root</span><span class="s">1.16 KB</span><span class="d" style="letter-spacing:0.40px">2024-06-14 11:49:39</span></div>
<div class="row" style="left:0;top:349px"><div class="cb"></div><svg class="fi" width="15" height="20" viewBox="0 0 15 20"><path d="M0 1a1 1 0 0 1 1-1h9.500L15 4.500V19a1 1 0 0 1-1 1H1a1 1 0 0 1-1-1z" fill="#ececec"/><path d="M10.500 0L15 4.500h-4.500z" fill="#c8c8c8"/><path d="M3 8h9M3 11.700h9M3 15.400h9" stroke="#d4d4d4" stroke-width="1.200"/></svg><span class="n" style="letter-spacing:0.54px">printcap</span><span class="p">未保护</span><svg class="lk" width="12" height="12" viewBox="0 0 12 12"><g fill="none" stroke="#b4b4b4" stroke-width="1.100"><rect x="3.500" y="5" width="8" height="6" rx="1.200"/><path d="M5 5V3.200a2.200 2.200 0 0 0-4.400 0v1"/></g></svg><span class="o" style="letter-spacing:0.74px">644/root</span><span class="s">233 B</span><span class="d" style="letter-spacing:0.35px">2013-06-07 22:31:32</span></div>
<div class="row hv" style="left:0;top:385px"><div class="cb"></div><svg class="fi" width="15" height="20" viewBox="0 0 15 20"><path d="M0 1a1 1 0 0 1 1-1h9.500L15 4.500V19a1 1 0 0 1-1 1H1a1 1 0 0 1-1-1z" fill="#ececec"/><path d="M10.500 0L15 4.500h-4.500z" fill="#c8c8c8"/><path d="M3 8h9M3 11.700h9M3 15.400h9" stroke="#d4d4d4" stroke-width="1.200"/></svg><span class="n" style="letter-spacing:0.53px">profile</span><span class="p">未保护</span><svg class="lk" width="12" height="12" viewBox="0 0 12 12"><g fill="none" stroke="#b4b4b4" stroke-width="1.100"><rect x="3.500" y="5" width="8" height="6" rx="1.200"/><path d="M5 5V3.200a2.200 2.200 0 0 0-4.400 0v1"/></g></svg><span class="o" style="letter-spacing:0.74px">644/root</span><span class="s">1.78 KB</span><span class="d" style="letter-spacing:0.35px">2020-04-01 12:29:31</span><span class="act"><b>编辑</b><b>复制</b><b>剪切</b><b>重命名</b><b>权限</b><b>压缩</b><b>删除</b><b>更多</b><svg width="9" height="6" viewBox="0 0 9 6" style="right:-11px;top:14px;left:auto"><path d="M.500.700l4 4 4-4" stroke="#20a53a" stroke-width="1" fill="none"/></svg></span></div>
<div class="row" style="left:0;top:421px"><div class="cb"></div><svg class="fi" width="15" height="20" viewBox="0 0 15 20"><path d="M0 1a1 1 0 0 1 1-1h9.500L15 4.500V19a1 1 0 0 1-1 1H1a1 1 0 0 1-1-1z" fill="#ececec"/><path d="M10.500 0L15 4.500h-4.500z" fill="#c8c8c8"/><path d="M3 8h9M3 11.700h9M3 15.400h9" stroke="#d4d4d4" stroke-width="1.200"/></svg><span class="n" style="letter-spacing:0.53px">protocols</span><span class="p">未保护</span><svg class="lk" width="12" height="12" viewBox="0 0 12 12"><g fill="none" stroke="#b4b4b4" stroke-width="1.100"><rect x="3.500" y="5" width="8" height="6" rx="1.200"/><path d="M5 5V3.200a2.200 2.200 0 0 0-4.400 0v1"/></g></svg><span class="o" style="letter-spacing:0.74px">644/root</span><span class="s">6.39 KB</span><span class="d" style="letter-spacing:0.35px">2020-04-01 12:29:32</span></div>
<div class="row" style="left:0;top:457px"><div class="cb"></div><svg class="fi" width="15" height="20" viewBox="0 0 15 20"><path d="M0 1a1 1 0 0 1 1-1h9.500L15 4.500V19a1 1 0 0 1-1 1H1a1 1 0 0 1-1-1z" fill="#ececec"/><path d="M10.500 0L15 4.500h-4.500z" fill="#c8c8c8"/><path d="M3 8h9M3 11.700h9M3 15.400h9" stroke="#d4d4d4" stroke-width="1.200"/></svg><span class="n" style="letter-spacing:0.40px">rc.local-&gt;rc.d/rc.local</span><span class="p">未保护</span><svg class="lk" width="12" height="12" viewBox="0 0 12 12"><g fill="none" stroke="#b4b4b4" stroke-width="1.100"><rect x="3.500" y="5" width="8" height="6" rx="1.200"/><path d="M5 5V3.200a2.200 2.200 0 0 0-4.400 0v1"/></g></svg><span class="o" style="letter-spacing:0.74px">644/root</span><span class="s">473 B</span><span class="d" style="letter-spacing:0.35px">2023-12-07 22:51:20</span></div>
<div class="row" style="left:0;top:493px"><div class="cb"></div><svg class="fi" width="15" height="20" viewBox="0 0 15 20"><path d="M0 1a1 1 0 0 1 1-1h9.500L15 4.500V19a1 1 0 0 1-1 1H1a1 1 0 0 1-1-1z" fill="#ececec"/><path d="M10.500 0L15 4.500h-4.500z" fill="#c8c8c8"/><path d="M3 8h9M3 11.700h9M3 15.400h9" stroke="#d4d4d4" stroke-width="1.200"/></svg><span class="n" style="letter-spacing:0.39px">redhat-release-&gt;centos-release</span><span class="p">未保护</span><svg class="lk" width="12" height="12" viewBox="0 0 12 12"><g fill="none" stroke="#b4b4b4" stroke-width="1.100"><rect x="3.500" y="5" width="8" height="6" rx="1.200"/><path d="M5 5V3.200a2.200 2.200 0 0 0-4.400 0v1"/></g></svg><span class="o" style="letter-spacing:0.74px">644/root</span><span class="s">37 B</span><span class="d" style="letter-spacing:0.40px">2020-11-23 23:08:41</span></div>
<div class="row" style="left:0;top:529px"><div class="cb"></div><svg class="fi" width="15" height="20" viewBox="0 0 15 20"><path d="M0 1a1 1 0 0 1 1-1h9.500L15 4.500V19a1 1 0 0 1-1 1H1a1 1 0 0 1-1-1z" fill="#ececec"/><path d="M10.500 0L15 4.500h-4.500z" fill="#c8c8c8"/><path d="M3 8h9M3 11.700h9M3 15.400h9" stroke="#d4d4d4" stroke-width="1.200"/></svg><span class="n" style="letter-spacing:0.37px">request-key.conf</span><span class="p">未保护</span><svg class="lk" width="12" height="12" viewBox="0 0 12 12"><g fill="none" stroke="#b4b4b4" stroke-width="1.100"><rect x="3.500" y="5" width="8" height="6" rx="1.200"/><path d="M5 5V3.200a2.200 2.200 0 0 0-4.400 0v1"/></g></svg><span class="o" style="letter-spacing:0.74px">644/root</span><span class="s">1.75 KB</span><span class="d" style="letter-spacing:0.35px">2014-06-10 10:17:54</span></div>
<div class="row" style="left:0;top:565px"><div class="cb"></div><svg class="fi" width="15" height="20" viewBox="0 0 15 20"><path d="M0 1a1 1 0 0 1 1-1h9.500L15 4.500V19a1 1 0 0 1-1 1H1a1 1 0 0 1-1-1z" fill="#ececec"/><path d="M10.500 0L15 4.500h-4.500z" fill="#c8c8c8"/><path d="M3 8h9M3 11.700h9M3 15.400h9" stroke="#d4d4d4" stroke-width="1.200"/></svg><span class="n" style="letter-spacing:0.26px">resolv.conf</span><span class="p">未保护</span><svg class="lk" width="12" height="12" viewBox="0 0 12 12"><g fill="none" stroke="#b4b4b4" stroke-width="1.100"><rect x="3.500" y="5" width="8" height="6" rx="1.200"/><path d="M5 5V3.200a2.200 2.200 0 0 0-4.400 0v1"/></g></svg><span class="o" style="letter-spacing:0.74px">644/root</span><span class="s">75 B</span><span class="d" style="letter-spacing:0.35px">2024-06-14 14:02:38</span></div>
</div>
<div class="a" style="left:1880px;top:665px;width:8px;height:46px;border-radius:4px;background:#e8e8e8"></div>
<div class="a" style="left:216px;top:173px;width:1672px;height:37px;background:#f5f5f5"></div>
<div class="cb" style="left:226px;top:185px"></div>
<div class="th" style="left:256px">文件名称</div>
<div class="th" style="left:676px">企业级防篡改</div>
<div class="th" style="letter-spacing:0.21px;left:796px">权限/所有者</div>
<div class="th" style="left:896px">大小</div>
<div class="th" style="left:996px">修改时间</div>
<div class="th" style="left:1156px">备注</div>
<div class="th" style="left:1836px">操作</div>
<div class="sa u" style="left:315px;top:185px;border-bottom-color:#20a53a"></div><div class="sa d" style="left:315px;top:193px;border-top-color:#c4c4c4"></div>
<div class="sa u" style="left:931px;top:185px;border-bottom-color:#c4c4c4"></div><div class="sa d" style="left:931px;top:193px;border-top-color:#c4c4c4"></div>
<div class="sa u" style="left:1055px;top:185px;border-bottom-color:#c4c4c4"></div><div class="sa d" style="left:1055px;top:193px;border-top-color:#c4c4c4"></div>
<div class="a" style="left:215px;top:68px;width:167px;height:47px;border:3px solid #fa1a0e;border-radius:4px"></div>
<div class="a" style="left:221px;top:598px;width:147px;height:31px;border:3px solid #fa1a0e;border-radius:4px"></div>
<div class="a" style="left:228px;top:803px;line-height:30px;color:#555;white-space:nowrap"><span style="letter-spacing:0.21px">共90个目录，111个文件，文件大小</span><span class="g" style="margin-left:10.200px">计算</span></div>
<div class="pg" style="left:1460px;width:30px;background:#f4f4f5"><svg width="6" height="10" viewBox="0 0 6 10" style="left:12px;top:9px"><path d="M5.300.700L1 5l4.300 4.300" stroke="#c0c4cc" stroke-width="1.300" fill="none"/></svg></div>
<div class="pg" style="left:1500px;width:30px;background:#8fd09c;color:#fff;font-weight:bold">1</div>
<div class="pg" style="left:1540px;width:30px;background:#f4f4f5"><svg width="6" height="10" viewBox="0 0 6 10" style="left:12px;top:9px"><path d="M.700.700L5 5 .700 9.300" stroke="#c0c4cc" stroke-width="1.300" fill="none"/></svg></div>
<div class="pg" style="left:1580px;width:100px;border:1px solid #dcdfe6;border-radius:3px;line-height:26px;text-align:left;padding-left:14px"><span style="letter-spacing:0.35px">500条/页</span><svg width="9" height="6" viewBox="0 0 9 6" style="left:82px;top:10px"><path d="M.500.700l4 4 4-4" stroke="#c0c4cc" stroke-width="1" fill="none"/></svg></div>
<div class="pg" style="left:1695px;letter-spacing:0.30px">共 201 条</div>
<div class="pg" style="left:1770px">前往</div>
<div class="pg" style="left:1800px;width:46px;border:1px solid #dcdfe6;border-radius:3px;line-height:26px">1</div>
<div class="pg" style="left:1850px">页</div>
<div class="a" style="left:1885px;top:699px;width:40px;height:150px;background:#fff;border-radius:4px;box-shadow:0 0 6px rgba(0,0,0,.080)"></div>
<svg width="15" height="15" viewBox="0 0 15 15" style="left:1896px;top:711px"><path d="M.800 8.200V7a6.700 6.700 0 0 1 13.400 0v1.200c0 .800-.600 1.300-1.300 1.300h-.600V6.600c0-.300-.100-.500-.300-.700C10.800 5.400 9.300 5.100 7.500 5.100S4.200 5.400 3 5.900c-.200.200-.300.400-.300.700v2.900h-.600C1.400 9.500.800 9 .800 8.200z" fill="#20a53a"/><path d="M3.600 6.500v2.200a3.900 3.900 0 0 0 7.800 0V6.500" fill="none" stroke="#20a53a" stroke-width="1"/><path d="M12.600 9.500c0 2.300-1.600 3.600-4.100 3.600" fill="none" stroke="#20a53a" stroke-width=".900"/><circle cx="8" cy="13.100" r="1" fill="#20a53a"/></svg>
<div class="a g" style="left:1895px;top:732px;width:16px;font-size:14px;line-height:15px;text-align:center">客服</div>
<svg width="14" height="14" viewBox="0 0 14 14" style="left:1896px;top:786px"><g fill="none" stroke="#20a53a" stroke-width="1.200"><path d="M7.500 1.500H1v11.500h11.500V7"/><path d="M5.500 9l.500-2.500L12 .800l1.700 1.700-5.800 6z"/></g></svg>
<div class="a g" style="left:1895px;top:808px;width:16px;font-size:14px;line-height:15px;text-align:center">评价</div>
<div id="foot"><div class="t" style="left:514.300px;width:auto;text-align:left"><span style="letter-spacing:0.27px">宝塔Linux面板©2014-2024 广东堡塔安全技术有限公司 (bt.cn)</span><span style="display:inline-block;width:8.300px"></span><a>论坛求助</a><i>|</i><a>使用手册</a><i>|</i><a>微信公众号</a><i>|</i><a>正版查询</a><i>|</i><a>联系人工客服</a></div></div>
</body>
</html>
